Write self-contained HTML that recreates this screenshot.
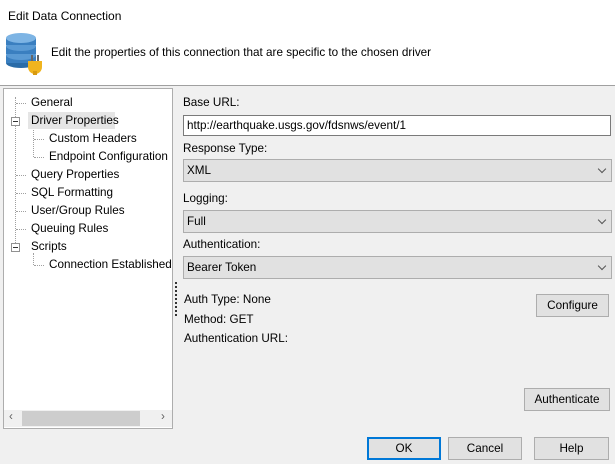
<!DOCTYPE html>
<html><head><style>
body{margin:0;width:615px;height:464px;background:#f0f0f0;font-family:"Liberation Sans",sans-serif;font-size:11.7px;color:#000;position:relative;overflow:hidden}
.a{position:absolute;white-space:nowrap}
.hdr{position:absolute;left:0;top:0;width:615px;height:85px;background:#fff;border-bottom:1px solid #a0a0a0}
.tree{position:absolute;left:3px;top:88px;width:168px;height:339px;background:#fff;border:1px solid #adadad}
.inp{position:absolute;left:183px;width:423px;height:19px;border:1px solid #7a7a7a;background:#fff;padding-left:3px;line-height:19px}
.cb{position:absolute;left:183px;width:424px;height:21px;border:1px solid #adadad;background:#e1e1e1;padding-left:3px;line-height:21px}
.cb:after{content:"";position:absolute;right:6px;top:6px;width:5px;height:5px;border-right:1px solid #555;border-bottom:1px solid #555;transform:rotate(45deg)}
.btn{position:absolute;height:21px;border:1px solid #adadad;background:#e1e1e1;text-align:center;line-height:21px}
.dot{position:absolute;border-top:1px dotted #a0a0a0;width:10px}
.vdot{position:absolute;border-left:1px dotted #a0a0a0}
.pm{position:absolute;width:7px;height:7px;border:1px solid #919191;background:#fff}
.pm:after{content:"";position:absolute;left:1px;top:3px;width:5px;height:1px;background:#333}
</style></head><body>
<div class="hdr"></div>
<div class="a" style="left:8px;top:9px;font-size:12px">Edit Data Connection</div>
<svg class="a" style="left:4px;top:33px" width="40" height="42" viewBox="0 0 40 42">
<ellipse cx="17" cy="30" rx="15" ry="5" fill="#2a6ca8"/><rect x="2" y="22" width="30" height="8" fill="#3a7fc0"/><ellipse cx="17" cy="22" rx="15" ry="5" fill="#5a9ad4"/>
<rect x="2" y="13" width="30" height="8" fill="#3a7fc0"/><ellipse cx="17" cy="13" rx="15" ry="5" fill="#5a9ad4"/>
<rect x="2" y="5" width="30" height="7" fill="#3a7fc0"/><ellipse cx="17" cy="5" rx="15" ry="5" fill="#7db4e4"/>
<rect x="27" y="22" width="2" height="6" fill="#666"/><rect x="33" y="22" width="2" height="6" fill="#666"/>
<path d="M24 28h14v6a7 7 0 0 1-14 0z" fill="#f0b41e"/><rect x="29" y="38" width="4" height="4" fill="#d89a10"/>
</svg>
<div class="a" style="left:51px;top:46px">Edit the properties of this connection that are specific to the chosen driver</div>
<div class="tree">
<div class="vdot" style="left:11px;top:8px;height:152px"></div>
<div class="vdot" style="left:29px;top:38px;height:30px"></div>
<div class="vdot" style="left:29px;top:164px;height:12px"></div>
<div class="dot" style="left:12px;top:14px"></div>
<div class="dot" style="left:30px;top:50px"></div>
<div class="dot" style="left:30px;top:68px"></div>
<div class="dot" style="left:12px;top:86px"></div>
<div class="dot" style="left:12px;top:104px"></div>
<div class="dot" style="left:12px;top:122px"></div>
<div class="dot" style="left:12px;top:140px"></div>
<div class="dot" style="left:30px;top:176px"></div>
<div class="pm" style="left:7px;top:28px"></div>
<div class="pm" style="left:7px;top:154px"></div>
<div class="a" style="left:24px;top:23px;width:87px;height:17px;background:#e5e5e5"></div>
<div class="a" style="left:27px;top:7px">General</div>
<div class="a" style="left:27px;top:25px">Driver Properties</div>
<div class="a" style="left:45px;top:43px">Custom Headers</div>
<div class="a" style="left:45px;top:61px">Endpoint Configuration</div>
<div class="a" style="left:27px;top:79px">Query Properties</div>
<div class="a" style="left:27px;top:97px">SQL Formatting</div>
<div class="a" style="left:27px;top:115px">User/Group Rules</div>
<div class="a" style="left:27px;top:133px">Queuing Rules</div>
<div class="a" style="left:27px;top:151px">Scripts</div>
<div class="a" style="left:45px;top:169px">Connection Established</div>
<div class="a" style="left:0;top:321px;width:168px;height:17px;background:#f0f0f0"></div>
<div class="a" style="left:18px;top:322px;width:118px;height:15px;background:#cdcdcd"></div>
<div class="a" style="left:5px;top:321px;color:#606060">&#8249;</div>
<div class="a" style="left:157px;top:321px;color:#606060">&#8250;</div>
</div>
<div class="vdot" style="left:175px;top:282px;height:34px;border-left:2px dotted #333"></div>
<div class="a" style="left:183px;top:96px">Base URL:</div>
<div class="inp" style="top:115px">http://earthquake.usgs.gov/fdsnws/event/1</div>
<div class="a" style="left:183px;top:142px">Response Type:</div>
<div class="cb" style="top:159px">XML</div>
<div class="a" style="left:183px;top:192px">Logging:</div>
<div class="cb" style="top:210px">Full</div>
<div class="a" style="left:183px;top:238px">Authentication:</div>
<div class="cb" style="top:256px">Bearer Token</div>
<div class="a" style="left:184px;top:293px">Auth Type: None</div>
<div class="a" style="left:184px;top:313px">Method: GET</div>
<div class="a" style="left:184px;top:332px">Authentication URL:</div>
<div class="btn" style="left:536px;top:294px;width:71px">Configure</div>
<div class="btn" style="left:524px;top:388px;width:84px">Authenticate</div>
<div class="btn" style="left:367px;top:437px;width:70px;border:2px solid #0078d7;height:19px;line-height:19px">OK</div>
<div class="btn" style="left:448px;top:437px;width:72px">Cancel</div>
<div class="btn" style="left:534px;top:437px;width:73px">Help</div>
</body></html>
